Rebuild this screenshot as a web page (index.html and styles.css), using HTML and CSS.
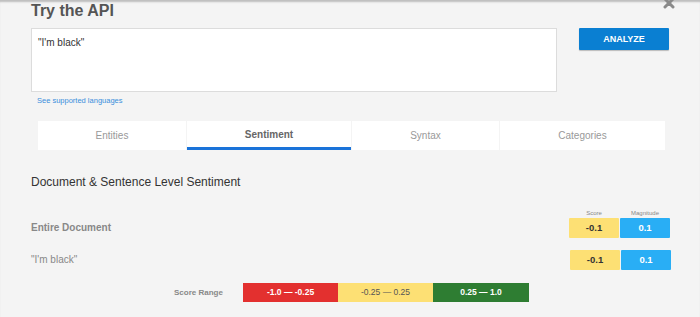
FILE: index.html
```html
<html>
   <head>
      <title>Try the API</title>
      <link rel="stylesheet" href="styles.css">
   </head>
<body>
   <div class="page">
     <div class="head">
       <h1 class="title">Try the API</h1>
       <svg class="close" width="12" height="12" viewBox="0 0 12 12"><path d="M2 2 L10 10 M10 2 L2 10" stroke="#8a8a8a" stroke-width="3" stroke-linecap="round"/></svg>
     </div>
     <div class="inputRow">
       <div class="textBox">"I'm black"</div>
       <div class="analyze">ANALYZE</div>
     </div>
     <a class="langLink">See supported languages</a>
     <div class="tabs">
       <div class="tab">Entities</div>
       <div class="tab active">Sentiment</div>
       <div class="tab">Syntax</div>
       <div class="tab">Categories</div>
     </div>
     <h2 class="section">Document &amp; Sentence Level Sentiment</h2>
     <div class="row first">
       <span class="rowLabel bold">Entire Document</span>
       <div class="scores">
         <div class="colHeads"><span>Score</span><span>Magnitude</span></div>
         <div class="pair"><span class="score">-0.1</span><span class="mag">0.1</span></div>
       </div>
     </div>
     <div class="row">
       <span class="rowLabel">"I'm black"</span>
       <div class="scores">
         <div class="pair"><span class="score">-0.1</span><span class="mag">0.1</span></div>
       </div>
     </div>
     <div class="range">
       <span class="rangeLabel">Score Range</span>
       <span class="bar neg">-1.0 &mdash; -0.25</span>
       <span class="bar mid">-0.25 &mdash; 0.25</span>
       <span class="bar pos">0.25 &mdash; 1.0</span>
     </div>
   </div>
</body>
</html>
```
FILE: styles.css
```css
body { margin: 0; background: #f4f4f4; font-family: "Liberation Sans", Arial, Helvetica, sans-serif; }
.page { position: relative; height: 317px; padding: 0 29px 0 31px; box-shadow: inset 0 3px 2px -1px #bdbdbd; box-sizing: border-box; }
.head { padding-top: 2px; height: 28px; box-sizing: border-box; }
.title { margin: 0; font-size: 16px; line-height: 18px; font-weight: bold; color: #555; }
.close { position: absolute; right: 25px; top: -3px; }
.inputRow { display: flex; align-items: flex-start; }
.textBox { width: 526px; height: 64px; box-sizing: border-box; background: #fff; border: 1px solid #dcdcdc; padding: 8px 6px; font-size: 10px; color: #333; }
.analyze { margin-left: 22px; width: 90px; height: 22px; line-height: 22px; text-align: center; background: #0a7fd2; color: #fff; font-size: 9px; font-weight: bold; border-radius: 1px; box-shadow: 0 1px 1px #bbb; }
.langLink { display: block; margin: 4px 0 0 6px; font-size: 7.5px; color: #3a8fdc; line-height: 9px; }
.tabs { display: flex; gap: 1px; margin: 16px 0 0 7px; width: 627px; height: 29px; }
.tab { flex: 1; background: #fff; font-size: 10px; color: #999; text-align: center; line-height: 29px; box-sizing: border-box; }
.tab:nth-child(1) { flex: 0 0 148px; }
.tab:nth-child(2) { flex: 0 0 164px; }
.tab:nth-child(3) { flex: 0 0 147px; }
.tab.active { color: #666; font-weight: bold; border-bottom: 3px solid #1a73d9; line-height: 27px; }
.section { margin: 25px 0 0 0; font-size: 12px; line-height: 14px; font-weight: normal; color: #333; }
.row { display: flex; justify-content: space-between; align-items: flex-end; height: 20px; margin-top: 12px; }
.row.first { margin-top: 20px; height: 29px; }
.rowLabel { font-size: 10px; color: #888; line-height: 20px; }
.rowLabel.bold { font-weight: bold; }
.colHeads { display: flex; font-size: 6px; color: #888; line-height: 9px; }
.colHeads span { width: 50px; text-align: center; margin-right: 1px; }
.pair { display: flex; gap: 1px; }
.pair span { width: 50px; height: 20px; line-height: 20px; text-align: center; font-size: 9.5px; font-weight: bold; border-radius: 1px; }
.score { background: #fde074; color: #333; }
.mag { background: #29aef5; color: #fff; }
.range { display: flex; align-items: center; margin: 13px 0 0 143px; }
.rangeLabel { width: 69px; font-size: 8px; font-weight: bold; color: #888; }
.bar { width: 95px; height: 19px; line-height: 19px; text-align: center; font-size: 8.5px; font-weight: bold; }
.neg { background: #e3302f; color: #fff; }
.mid { background: #fde074; color: #555; font-weight: normal; }
.pos { background: #2e7d32; color: #fff; width: 96px; }
```
